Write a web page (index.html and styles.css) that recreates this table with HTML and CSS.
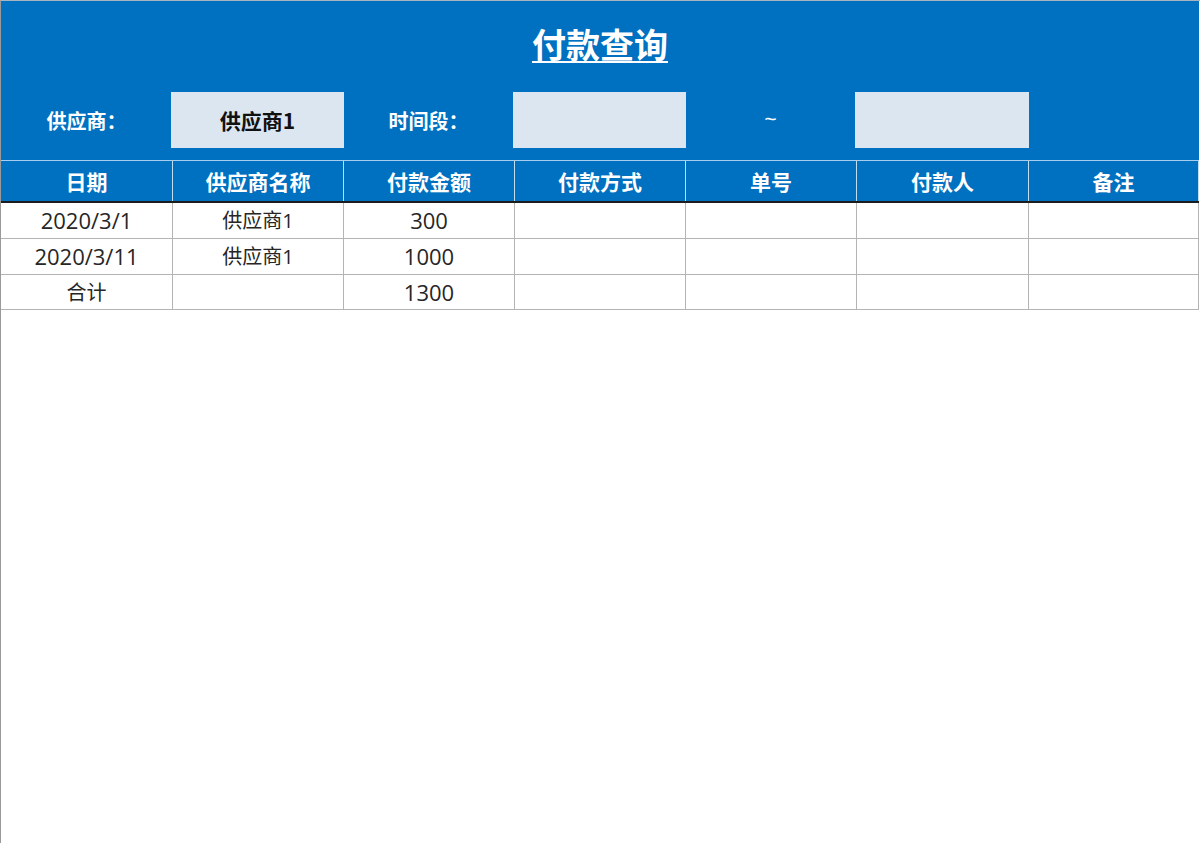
FILE: index.html
```html
<!DOCTYPE html>
<html lang="zh-CN">
<head>
<meta charset="utf-8">
<title>付款查询</title>
<link rel="stylesheet" href="styles.css">
</head>
<body>
<div class="sheet">
  <div class="banner">
    <h1 class="title">付款查询</h1>
    <div class="filters">
      <div class="label">供应商：</div>
      <div class="box value">供应商1</div>
      <div class="label">时间段：</div>
      <div class="box"></div>
      <div class="label tilde">~</div>
      <div class="box"></div>
      <div></div>
    </div>
  </div>
  <div class="grid head">
    <div class="cell">日期</div>
    <div class="cell">供应商名称</div>
    <div class="cell">付款金额</div>
    <div class="cell">付款方式</div>
    <div class="cell">单号</div>
    <div class="cell">付款人</div>
    <div class="cell">备注</div>
  </div>
  <div class="grid row">
    <div class="cell num">2020/3/1</div>
    <div class="cell">供应商1</div>
    <div class="cell num">300</div>
    <div class="cell"></div>
    <div class="cell"></div>
    <div class="cell"></div>
    <div class="cell"></div>
  </div>
  <div class="grid row">
    <div class="cell num">2020/3/11</div>
    <div class="cell">供应商1</div>
    <div class="cell num">1000</div>
    <div class="cell"></div>
    <div class="cell"></div>
    <div class="cell"></div>
    <div class="cell"></div>
  </div>
  <div class="grid row">
    <div class="cell">合计</div>
    <div class="cell"></div>
    <div class="cell num">1300</div>
    <div class="cell"></div>
    <div class="cell"></div>
    <div class="cell"></div>
    <div class="cell"></div>
  </div>
</div>
</body>
</html>
```

FILE: styles.css
```css
* { box-sizing: border-box; }
html, body {
  margin: 0;
  padding: 0;
  background: #ffffff;
}
body {
  font-family: "Open Sans", "Noto Sans CJK SC", "Noto Sans", sans-serif;
  color: #222222;
}
.sheet {
  width: 1200px;
  height: 843px;
  border-left: 1px solid #9a9a9a;
  border-top: 1px solid #a9b4c0;
}
.banner {
  width: 1198px;
  height: 159px;
  background: #0070c0;
  padding-top: 12px;
  display: flex;
  flex-direction: column;
}
.title {
  margin: 0;
  height: 62px;
  line-height: 62px;
  text-align: center;
  font-family: "Noto Sans CJK SC", sans-serif;
  font-size: 34px;
  font-weight: 700;
  color: #ffffff;
  text-decoration: underline;
  text-decoration-thickness: 2px;
  text-underline-offset: 3px;
}
.filters {
  margin-top: 17px;
  display: grid;
  grid-template-columns: 171px 171px 171px 171px 171px 172px 171px;
  height: 56px;
}
.label {
  color: #ffffff;
  font-family: "Noto Sans CJK SC", sans-serif;
  font-size: 20px;
  font-weight: 700;
  display: flex;
  align-items: center;
  justify-content: center;
}
.tilde {
  font-family: "Open Sans", sans-serif;
  font-weight: 400;
  font-size: 22px;
  padding-bottom: 4px;
}
.box {
  background: #dce6f1;
  margin: 0 -1px 0 -1px;
  display: flex;
  align-items: center;
  justify-content: center;
}
.value {
  font-family: "Noto Sans CJK SC", sans-serif;
  font-size: 21px;
  font-weight: 700;
  color: #111111;
}
.grid {
  display: grid;
  grid-template-columns: 172px 171px 171px 171px 171px 172px 170px;
  width: 1198px;
}
.head {
  background: #0070c0;
  border-top: 1px solid #a8cdee;
  border-bottom: 2px solid #1c1c1c;
  height: 43px;
}
.head .cell {
  color: #ffffff;
  font-family: "Noto Sans CJK SC", sans-serif;
  font-size: 21px;
  font-weight: 700;
  border-right: 1px solid #c2dcf2;
}
.cell {
  display: flex;
  align-items: center;
  justify-content: center;
  border-right: 1px solid #b4b4b4;
  white-space: nowrap;
}
.row {
  height: 36px;
  border-bottom: 1px solid #b4b4b4;
}
.row:last-child {
  height: 35px;
}
.row .cell {
  font-size: 20px;
  color: #262626;
  padding-bottom: 2px;
}
.row .num {
  font-size: 22px;
  padding-bottom: 1px;
}
```
